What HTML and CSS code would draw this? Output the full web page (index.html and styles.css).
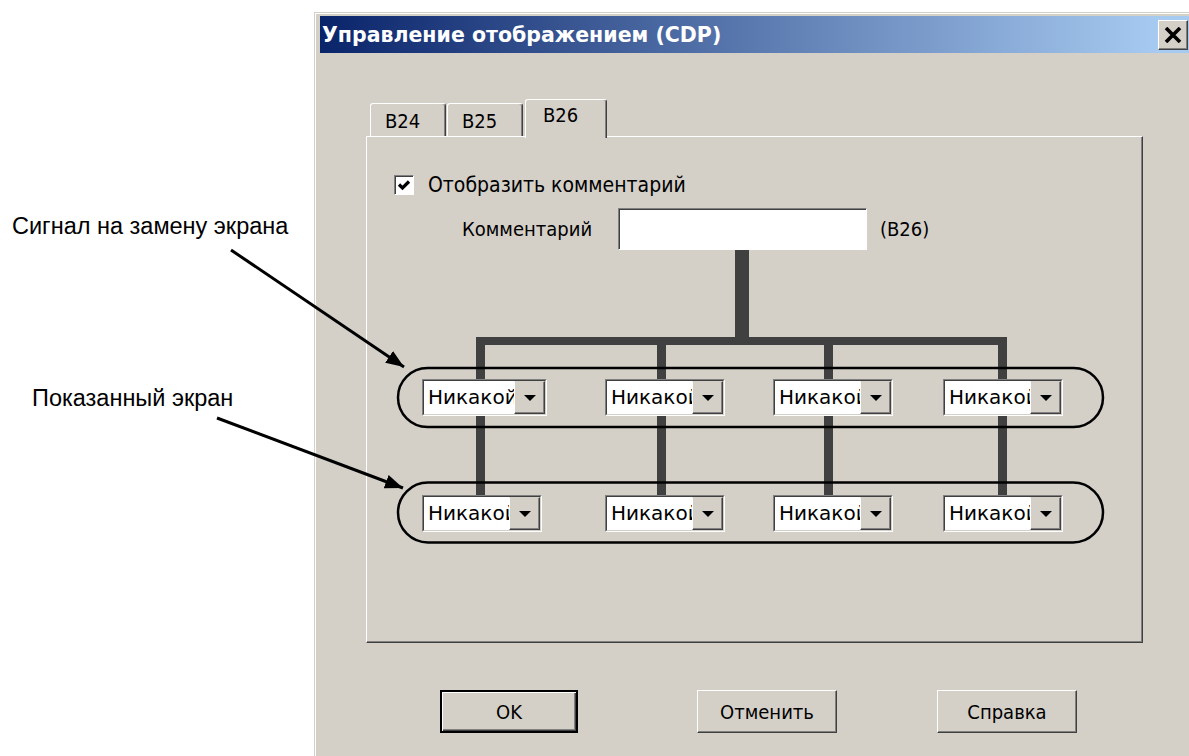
FILE: index.html
```html
<!DOCTYPE html>
<html lang="ru">
<head>
  <meta charset="UTF-8" />
  <title>Управление отображением (CDP)</title>
  <link rel="stylesheet" href="styles.css">
</head>
<body>
  <div class="page">
    <div class="dialog">
      <div class="titlebar">
        <span class="title">Управление отображением (CDP)</span>
        <span class="close-btn">
          <svg width="18" height="16" viewBox="0 0 18 16"><path d="M2 1 L16 15 M16 1 L2 15" stroke="#000" stroke-width="3.6"/></svg>
        </span>
      </div>

      <div class="tabs">
        <div class="tab">B24</div>
        <div class="tab">B25</div>
        <div class="tab active">B26</div>
      </div>

      <div class="panel">
        <div class="check-row">
          <span class="checkbox">
            <svg width="16" height="16" viewBox="0 0 16 16"><path d="M3 7.5 L6.5 11 L13 4.5" fill="none" stroke="#000" stroke-width="3.2"/></svg>
          </span>
          <span class="check-label">Отобразить комментарий</span>
        </div>

        <div class="comment-row">
          <span class="comment-label">Комментарий</span>
          <span class="textbox"></span>
          <span class="comment-id">(B26)</span>
        </div>

        <!-- схема: сигнал -> экраны -->
        <div class="tree">
          <div class="trunk"></div>
          <div class="hbar"></div>
          <div class="branches">
            <div class="branch">
              <div class="drop short"></div>
              <div class="combo wide"><div class="combo-in"><span class="combo-field">Никакой</span><span class="combo-btn"><i class="arrow"></i></span></div></div>
              <div class="drop long"></div>
              <div class="combo"><div class="combo-in"><span class="combo-field">Никакой</span><span class="combo-btn"><i class="arrow"></i></span></div></div>
            </div>
            <div class="branch">
              <div class="drop short"></div>
              <div class="combo"><div class="combo-in"><span class="combo-field">Никакой</span><span class="combo-btn"><i class="arrow"></i></span></div></div>
              <div class="drop long"></div>
              <div class="combo"><div class="combo-in"><span class="combo-field">Никакой</span><span class="combo-btn"><i class="arrow"></i></span></div></div>
            </div>
            <div class="branch">
              <div class="drop short"></div>
              <div class="combo"><div class="combo-in"><span class="combo-field">Никакой</span><span class="combo-btn"><i class="arrow"></i></span></div></div>
              <div class="drop long"></div>
              <div class="combo"><div class="combo-in"><span class="combo-field">Никакой</span><span class="combo-btn"><i class="arrow"></i></span></div></div>
            </div>
            <div class="branch">
              <div class="drop short"></div>
              <div class="combo"><div class="combo-in"><span class="combo-field">Никакой</span><span class="combo-btn"><i class="arrow"></i></span></div></div>
              <div class="drop long"></div>
              <div class="combo"><div class="combo-in"><span class="combo-field">Никакой</span><span class="combo-btn"><i class="arrow"></i></span></div></div>
            </div>
          </div>
        </div>
      </div>

      <div class="buttons">
        <button class="btn default">OK</button>
        <button class="btn btn-cancel">Отменить</button>
        <button class="btn btn-help">Справка</button>
      </div>
    </div>

    <div class="callout callout-signal">Сигнал на замену экрана</div>
    <div class="callout callout-shown">Показанный экран</div>

    <svg class="marks" width="1189" height="756" viewBox="0 0 1189 756">
      <defs>
        <marker id="head" markerWidth="20" markerHeight="14" refX="18" refY="7" orient="auto" markerUnits="userSpaceOnUse">
          <path d="M0 0 L18 7 L0 14 Z" fill="#000"/>
        </marker>
      </defs>
      <line x1="231" y1="250" x2="404" y2="367" stroke="#000" stroke-width="3" marker-end="url(#head)"/>
      <line x1="217" y1="418" x2="403" y2="488" stroke="#000" stroke-width="3" marker-end="url(#head)"/>
      <rect x="398" y="368" width="705" height="59" rx="29.5" fill="none" stroke="#000" stroke-width="2.5"/>
      <rect x="398" y="482.5" width="705" height="60" rx="30" fill="none" stroke="#000" stroke-width="2.5"/>
    </svg>
  </div>
</body>
</html>
```

FILE: styles.css
```css
* {
  box-sizing: border-box;
}
body {
  margin: 0;
  background: #fff;
  color: #000;
  font-family: "DejaVu Sans Condensed", "DejaVu Sans", sans-serif;
}
.page {
  position: relative;
  width: 1189px;
  height: 756px;
  overflow: hidden;
}

/* окно */
.dialog {
  margin: 12px 0 0 314px;
  width: 879px;
  height: 744px;
  padding: 3px 0 0 5px;
  background: #d4d0c8;
  border-top: 1px solid #d4d0c8;
  border-left: 1px solid #d4d0c8;
  box-shadow: inset 1px 1px 0 #fff;
}
.titlebar {
  height: 37px;
  display: flex;
  align-items: center;
  justify-content: space-between;
  padding-left: 2px;
  background: linear-gradient(to right, #0a246a, #a6caf0 96%);
  color: #fff;
  font: bold 20.5px "DejaVu Sans", sans-serif;
}
.close-btn {
  width: 30px;
  height: 30px;
  margin-right: 5px;
  display: flex;
  align-items: center;
  justify-content: center;
  background: #d4d0c8;
  border: 1px solid;
  border-color: #fff #404040 #404040 #fff;
  box-shadow: inset -1px -1px 0 #808080;
}

/* вкладки */
.tabs {
  display: flex;
  align-items: flex-end;
  height: 37px;
  margin: 46px 0 0 50px;
}
.tab {
  width: 76px;
  height: 33px;
  padding: 6px 0 0 14px;
  font-size: 20px;
  line-height: 22px;
  background: #d4d0c8;
  border: 1px solid;
  border-color: #fff #404040 transparent #fff;
  border-bottom: none;
  border-radius: 3px 3px 0 0;
  box-shadow: inset -1px 0 0 #808080;
}
.tab + .tab {
  margin-left: 1px;
}
.tab.active {
  position: relative;
  z-index: 1;
  width: 82px;
  height: 39px;
  margin-left: 2px;
  margin-bottom: -2px;
  padding: 4px 0 0 17px;
}

.panel {
  width: 777px;
  height: 507px;
  margin-left: 46px;
  border: 1px solid;
  border-color: #fff #404040 #404040 #fff;
  box-shadow: inset -1px -1px 0 #808080;
  font-size: 20px;
}
.check-row {
  display: flex;
  align-items: center;
  height: 20px;
  margin: 38px 0 0 27px;
}
.checkbox {
  width: 20px;
  height: 20px;
  display: flex;
  align-items: center;
  justify-content: center;
  background: #fff;
  border: 1px solid;
  border-color: #808080 #fff #fff #808080;
  box-shadow: inset 1px 1px 0 #404040;
}
.check-label {
  margin-left: 14px;
  font-size: 21px;
  line-height: 20px;
}
.comment-row {
  display: flex;
  align-items: center;
  height: 42px;
  margin-top: 13px;
}
.comment-label {
  width: 156px;
  margin-left: 95px;
}
.textbox {
  width: 249px;
  height: 42px;
  background: #fff;
  border: 1px solid;
  border-color: #808080 #fff #fff #808080;
  box-shadow: inset 1px 1px 0 #404040;
}
.comment-id {
  margin-left: 13px;
}

/* схема */
.trunk {
  width: 14px;
  height: 87px;
  margin-left: 368px;
  background: #404040;
}
.hbar {
  width: 531px;
  height: 8px;
  margin-left: 109px;
  background: #404040;
}
.branches {
  display: grid;
  grid-template-columns: 183px 168px 170px 130px;
  margin-left: 55px;
}
.drop {
  width: 9px;
  background: #404040;
}
.drop.short {
  height: 34px;
}
.drop.long {
  height: 79px;
}
.branch:nth-child(1) .drop { margin-left: 54px; }
.branch:nth-child(2) .drop { margin-left: 52px; }
.branch:nth-child(3) .drop { margin-left: 51px; }
.branch:nth-child(4) .drop { margin-left: 55px; }

.combo {
  width: 120px;
  height: 37px;
  border: 1px solid;
  border-color: #808080 #fff #fff #808080;
}
.combo.wide {
  width: 125px;
}
.combo-in {
  display: flex;
  height: 100%;
  border: 1px solid;
  border-color: #404040 #d4d0c8 #d4d0c8 #404040;
}
.combo-field {
  flex: 1;
  overflow: hidden;
  white-space: nowrap;
  padding-left: 4px;
  background: #fff;
  font: 20px/33px "DejaVu Sans", sans-serif;
}
.combo-btn {
  width: 31px;
  flex: none;
  display: flex;
  align-items: center;
  justify-content: center;
  background: #d4d0c8;
  border: 1px solid;
  border-color: #d4d0c8 #404040 #404040 #fff;
  box-shadow: inset -1px -1px 0 #808080;
}
.arrow {
  width: 0;
  height: 0;
  border-left: 6px solid transparent;
  border-right: 6px solid transparent;
  border-top: 6px solid #000;
}

/* кнопки */
.buttons {
  display: flex;
  margin: 47px 0 0 120px;
}
.btn {
  width: 140px;
  height: 43px;
  padding: 0;
  font: 20px "DejaVu Sans Condensed", "DejaVu Sans", sans-serif;
  color: #000;
  background: #d4d0c8;
  border: 1px solid;
  border-color: #fff #404040 #404040 #fff;
  box-shadow: inset -1px -1px 0 #808080;
}
.btn.default {
  width: 138px;
  border: 2px solid #000;
  box-shadow: inset 1px 1px 0 #fff, inset -1px -1px 0 #404040, inset -2px -2px 0 #808080;
}
.btn-cancel {
  margin-left: 119px;
}
.btn-help {
  margin-left: 100px;
}

/* пояснения */
.callout {
  position: absolute;
  font: 23.5px/1 "Liberation Sans", Arial, sans-serif;
  white-space: nowrap;
}
.callout-signal {
  left: 12px;
  top: 215px;
}
.callout-shown {
  left: 32px;
  top: 387px;
}
.marks {
  position: absolute;
  left: 0;
  top: 0;
  pointer-events: none;
}
```
